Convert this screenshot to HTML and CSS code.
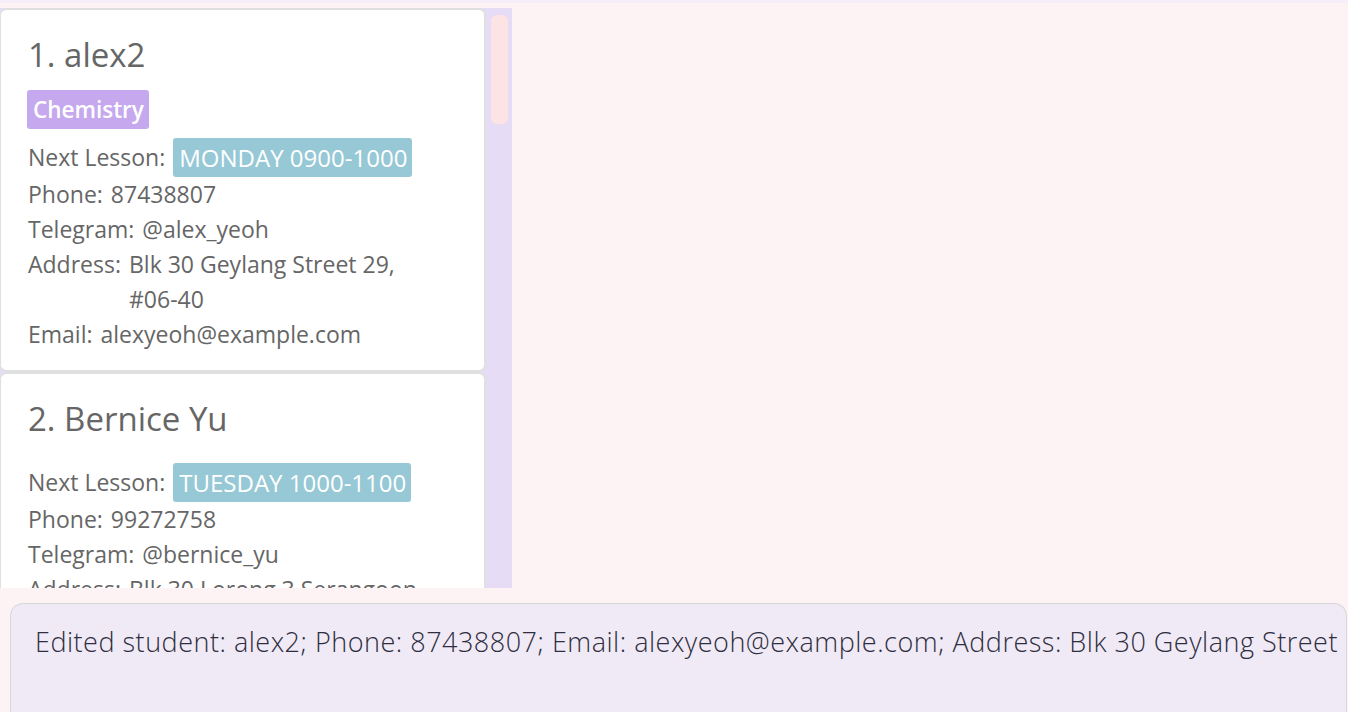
FILE: index.html
```html
<!DOCTYPE html>
<html>
<head>
<meta charset="utf-8">
<link rel="stylesheet" href="styles.css">
</head>
<body>
<div class="app">
  <div class="top-strip"></div>
  <div class="main">
    <div class="list-panel">
      <div class="list">
        <div class="card">
          <div class="name">1. alex2</div>
          <div class="tags"><span class="tag subject">Chemistry</span></div>
          <div class="row lesson-row"><span class="label">Next Lesson:</span><span class="tag lesson">MONDAY 0900-1000</span></div>
          <div class="row"><span class="label">Phone:</span><span class="value">87438807</span></div>
          <div class="row"><span class="label">Telegram:</span><span class="value">@alex_yeoh</span></div>
          <div class="row"><span class="label">Address:</span><span class="value">Blk 30 Geylang Street 29,<br>#06-40</span></div>
          <div class="row"><span class="label">Email:</span><span class="value">alexyeoh@example.com</span></div>
        </div>
        <div class="card">
          <div class="name">2. Bernice Yu</div>
          <div class="tags"></div>
          <div class="row lesson-row"><span class="label">Next Lesson:</span><span class="tag lesson">TUESDAY 1000-1100</span></div>
          <div class="row"><span class="label">Phone:</span><span class="value">99272758</span></div>
          <div class="row"><span class="label">Telegram:</span><span class="value">@bernice_yu</span></div>
          <div class="row"><span class="label">Address:</span><span class="value">Blk 30 Lorong 3 Serangoon Gardens, #07-18</span></div>
          <div class="row"><span class="label">Email:</span><span class="value">berniceyu@example.com</span></div>
        </div>
      </div>
      <div class="scrollbar"><div class="thumb"></div></div>
    </div>
    <div class="detail-area"></div>
  </div>
  <div class="result-wrap">
    <div class="result">Edited student: alex2; Phone: 87438807; Email: alexyeoh@example.com; Address: Blk 30 Geylang Street 29, #06-40; Telegram: @alex_yeoh; Subject: Chemistry</div>
  </div>
</div>
</body>
</html>
```
FILE: styles.css
```css
html, body {
  margin: 0;
  padding: 0;
  height: 100%;
  overflow: hidden;
}
body {
  background: #fdf2f4;
  font-family: "Open Sans", "Noto Sans", sans-serif;
}
.app {
  display: flex;
  flex-direction: column;
  height: 712px;
}
.top-strip {
  height: 3px;
  background: #f6eef8;
  flex: none;
}
.main {
  display: flex;
  margin-top: 5px;
  height: 580px;
  flex: none;
}
.list-panel {
  width: 512px;
  height: 580px;
  background: #e6dcf6;
  display: flex;
  overflow: hidden;
  flex: none;
}
.list {
  width: 486px;
  flex: none;
  overflow: hidden;
}
.card {
  background: #ffffff;
  border: 2px solid #e0e0e0;
  border-left-width: 1px;
  border-radius: 7px;
  padding: 20px 24px 18px 27px;
  color: #666666;
  font-size: 23px;
}
.name {
  font-size: 33px;
  line-height: 50px;
  height: 50px;
}
.tags {
  display: flex;
  gap: 8px;
  margin: 10px 0 9px;
}
.tag {
  display: inline-block;
  color: #ffffff;
  border-radius: 3px;
  height: 39px;
  line-height: 39px;
  padding: 0 6px;
}
.tag.subject {
  background: #c5a8ee;
  font-weight: 600;
  font-size: 22.5px;
  padding: 0 5px 0 6px;
  margin-left: -1px;
}
.tag.lesson {
  background: #96c8d6;
  font-size: 24px;
  padding: 0 5px 0 6px;
}
.row {
  display: flex;
  line-height: 35px;
}
.lesson-row {
  height: 39px;
  align-items: center;
  line-height: 39px;
}
.label {
  flex: none;
  margin-right: 8px;
}
.value {
  flex: 0 1 auto;
}
.scrollbar {
  width: 26px;
  flex: none;
  padding: 7px 4px 0 5px;
  box-sizing: border-box;
}
.thumb {
  height: 109px;
  background: #fde4e4;
  border-radius: 6px;
}
.detail-area {
  flex: 1;
}
.result-wrap {
  flex: 1;
  padding: 15px 1px 0 10px;
  display: flex;
  min-height: 0;
}
.result {
  flex: 1;
  background: #f0eaf6;
  border: 1px solid #d8d8d8;
  border-bottom: none;
  border-radius: 13px 13px 0 0;
  padding: 18px 8px 0 24px;
  font-size: 27px;
  font-weight: 300;
  letter-spacing: 0.5px;
  line-height: 40px;
  color: #2e2e40;
  white-space: nowrap;
  overflow: hidden;
}
```
